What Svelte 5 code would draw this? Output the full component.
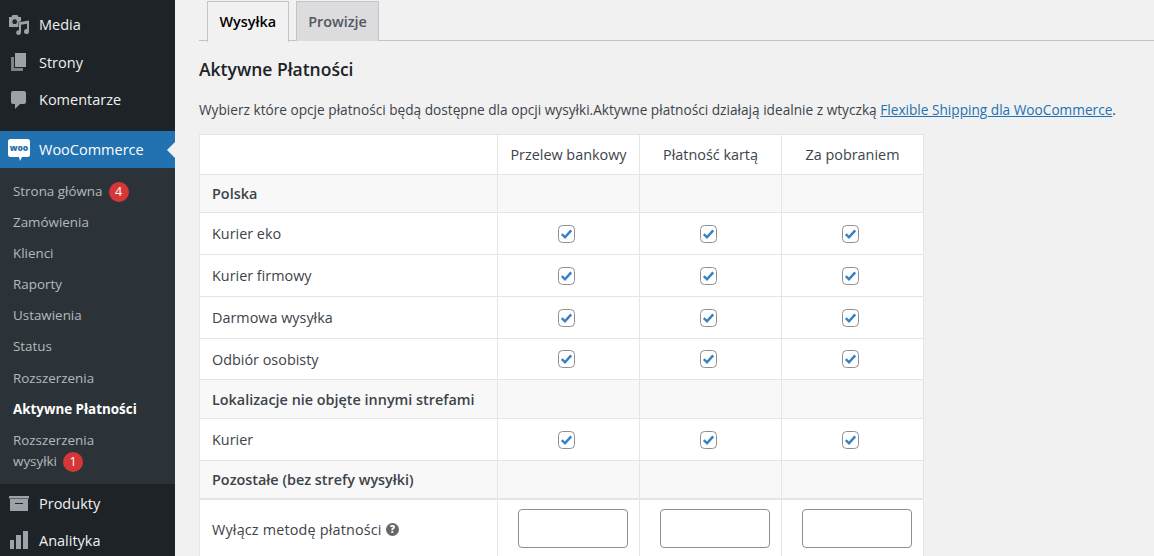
<script lang="ts">
  const subItems = [
    { label: 'Strona główna', badge: '4' },
    { label: 'Zamówienia' },
    { label: 'Klienci' },
    { label: 'Raporty' },
    { label: 'Ustawienia' },
    { label: 'Status' },
    { label: 'Rozszerzenia' },
    { label: 'Aktywne Płatności', current: true },
    { label: 'Rozszerzenia', line2: 'wysyłki', badge: '1', narrow: true }
  ];

  const columns = ['Przelew bankowy', 'Płatność kartą', 'Za pobraniem'];

  const rows = [
    { label: 'Polska', group: true, h: 38 },
    { label: 'Kurier eko', h: 42 },
    { label: 'Kurier firmowy', h: 42 },
    { label: 'Darmowa wysyłka', h: 42 },
    { label: 'Odbiór osobisty', h: 41 },
    { label: 'Lokalizacje nie objęte innymi strefami', group: true, h: 39 },
    { label: 'Kurier', h: 42 },
    { label: 'Pozostałe (bez strefy wysyłki)', group: true, h: 38 }
  ];
</script>

{#snippet check()}
  <svg class="check" width="17" height="18" viewBox="0 0 17 18">
    <rect x="0.5" y="0.5" width="16" height="17" rx="4" fill="#fff" stroke="#8c8f94" />
    <path d="M3.800 9.200l3.200 3.100 6.200-7" fill="none" stroke="#3582c4" stroke-width="2.500" />
  </svg>
{/snippet}

<div class="page">
  <aside class="sidebar">
    <ul class="menu">
      <li class="item">
        <svg class="ico" viewBox="0 0 22 22" width="22" height="22">
          <path fill="#9ca2a7" fill-rule="evenodd" d="M1 3h2.500L4.500 1h5l1 2H13v10H1zM6.700 5.300a2.400 2.400 0 1 0 .01 0z" />
          <path fill="#9ca2a7" stroke="#1d2327" stroke-width="1" paint-order="stroke" d="M11 8.200l10-1.700v11a2.500 2.500 0 1 1-2-2.400V9.800l-6 1v7.700a2.400 2.400 0 1 1-2-2.300z" />
        </svg>
        Media
      </li>
      <li class="item">
        <svg class="ico" viewBox="0 0 22 22" width="22" height="22">
          <path fill="#7e8389" d="M3 6h3v11h9v3H3z" />
          <path fill="#9ca2a7" d="M7 2h11v14H7z" />
        </svg>
        Strony
      </li>
      <li class="item">
        <svg class="ico" viewBox="0 0 22 22" width="22" height="22">
          <path fill="#9ca2a7" d="M5 2h11a2 2 0 0 1 2 2v9a2 2 0 0 1-2 2h-4l-5 5v-5H5a2 2 0 0 1-2-2V4a2 2 0 0 1 2-2z" />
        </svg>
        Komentarze
      </li>
      <li class="item woo">
        <svg class="ico" viewBox="0 0 22 22" width="22" height="22">
          <path fill="#fff" d="M2.500 0h17A2.500 2.500 0 0 1 22 2.500v13a2.500 2.500 0 0 1-2.500 2.500H14l-2 4-1-4H2.500A2.500 2.500 0 0 1 0 15.500v-13A2.500 2.500 0 0 1 2.500 0z" />
          <text x="11" y="12" text-anchor="middle" fill="#2271b1" font-size="8.500" font-weight="800" font-family="Open Sans, sans-serif">woo</text>
        </svg>
        WooCommerce
        <span class="arrow"></span>
      </li>
      <ul class="sub">
        {#each subItems as s, i (i)}
          <li class:current={s.current} class:narrow={s.narrow}>
            {s.label}{#if s.line2}<br />{s.line2}{/if}{#if s.badge}<span class="badge">{s.badge}</span>{/if}
          </li>
        {/each}
      </ul>
      <li class="item">
        <svg class="ico" viewBox="0 0 22 22" width="22" height="22">
          <path fill="#9ca2a7" fill-rule="evenodd" d="M1 4h20v2.500H1zM2 7h18v12H2zM7 11v1h8v-1z" />
        </svg>
        Produkty
      </li>
      <li class="item">
        <svg class="ico" viewBox="0 0 22 22" width="22" height="22">
          <path fill="#9ca2a7" d="M2 10h4v9H2zM8 5h5v14H8zM15 1h5v18h-5z" />
        </svg>
        Analityka
      </li>
    </ul>
  </aside>

  <main class="content">
    <nav class="tabs">
      <span class="tab active">Wysyłka</span>
      <span class="tab">Prowizje</span>
    </nav>

    <h2>Aktywne Płatności</h2>
    <p>Wybierz które opcje płatności będą dostępne dla opcji wysyłki.Aktywne płatności działają idealnie z wtyczką <a href="#top">Flexible Shipping dla WooCommerce</a>.</p>

    <table>
      <thead>
        <tr>
          <th></th>
          {#each columns as c (c)}
            <th>{c}</th>
          {/each}
        </tr>
      </thead>
      <tbody>
        {#each rows as r (r.label)}
          <tr class:group={r.group} style="height: {r.h}px">
            <td class="name">{r.label}</td>
            {#each columns as c (c)}
              <td class="cell">
                {#if !r.group}{@render check()}{/if}
              </td>
            {/each}
          </tr>
        {/each}
        <tr class="last">
          <td class="name">
            <span class="with-tip">
              Wyłącz metodę płatności
              <svg class="tip" viewBox="0 0 14 14" width="13" height="13">
                <circle cx="7" cy="7" r="7" fill="#666" />
                <text x="7" y="10.700" text-anchor="middle" fill="#fff" font-size="10.500" font-weight="800" font-family="Open Sans, sans-serif">?</text>
              </svg>
            </span>
          </td>
          {#each columns as c (c)}
            <td class="cell"><input type="text" /></td>
          {/each}
        </tr>
      </tbody>
    </table>
  </main>
</div>

<style>
  :global(body) { margin: 0; background: #f1f1f1; }

  .page {
    display: flex;
    height: 556px;
    overflow: hidden;
    font-family: "Open Sans", sans-serif;
    font-size: 14.4px;
    color: #3c434a;
    background: #f1f1f1;
  }

  .sidebar { width: 175px; flex: none; background: #1d2327; }
  .menu, .sub { list-style: none; margin: 0; padding: 0; }
  .menu { padding-top: 5.45px; }

  .item {
    position: relative;
    display: flex;
    align-items: center;
    gap: 9px;
    height: 37.7px;
    padding-left: 8px;
    padding-top: 0.6px;
    box-sizing: border-box;
    color: #f0f0f1;
    font-size: 14.5px;
  }
  .ico { flex: none; }
  .woo {
    margin-top: 12.45px;
    height: 37px;
    background: #2271b1;
    color: #fff;
  }
  .arrow {
    position: absolute;
    right: 0;
    top: 11px;
    border: 8px solid transparent;
    border-right-color: #f1f1f1;
    border-left-width: 0;
  }

  .sub { background: #2c3338; padding: 7.72px 0 0; height: 316px; box-sizing: border-box; }
  .sub li {
    padding: 0 13px;
    height: 31.17px;
    line-height: 31px;
    font-size: 13.4px;
    color: #b4b9be;
    white-space: nowrap;
  }
  .sub li.current { color: #fff; font-weight: 700; }
  .sub li.narrow { line-height: 21px; height: auto; padding-top: 5px; }

  .badge {
    display: inline-block;
    width: 20px;
    height: 20px;
    margin-left: 6px;
    border-radius: 50%;
    background: #d63638;
    color: #fff;
    font-size: 12.5px;
    line-height: 20px;
    text-align: center;
    vertical-align: 0;
  }

  .content { flex: 1; min-width: 0; padding: 0 0 0 24px; }

  .tabs {
    display: flex;
    align-items: flex-start;
    gap: 7px;
    height: 41px;
    padding: 1px 0 0 8px;
    box-sizing: border-box;
    border-bottom: 1px solid #c3c4c7;
  }
  .tab {
    height: 39px;
    line-height: 40px;
    padding: 0 11.5px;
    border: 1px solid #c3c4c7;
    border-bottom: 0;
    background: #dcdcde;
    color: #50575e;
    font-weight: 600;
  }
  .tab.active {
    height: 40px;
    background: #f1f1f1;
    color: #000;
  }

  h2 {
    margin: 17px 0 0;
    font-size: 17.5px;
    line-height: 22px;
    font-weight: 600;
    color: #1d2327;
  }
  p {
    margin: 21px 0 0;
    font-size: 13.66px;
    line-height: 18px;
    white-space: nowrap;
  }
  a { color: #2271b1; }

  table {
    margin-top: 15px;
    border-collapse: collapse;
    table-layout: fixed;
    width: 725px;
    background: #fff;
  }
  th, td { border: 1px solid #e5e5e5; padding: 0; }
  th:nth-child(1) { width: 297px; }
  th { width: 141px; height: 39px; font-weight: 400; }
  .group { background: #f8f8f8; }
  .group .name { font-weight: 600; }
  .name { padding-left: 12px; }
  .cell { text-align: center; }
  .check { display: inline-block; margin: 0 4px 1px 0; vertical-align: middle; }
  .last td { height: 60px; border-top-width: 2px; }
  .with-tip { display: inline-flex; align-items: center; gap: 4px; letter-spacing: 0.17px; }
  input {
    display: inline-block;
    margin: 0 0 2px 8px;
    width: 110px;
    height: 39px;
    box-sizing: border-box;
    border: 1px solid #8c8f94;
    border-radius: 4px;
    background: #fff;
    vertical-align: middle;
  }
</style>
